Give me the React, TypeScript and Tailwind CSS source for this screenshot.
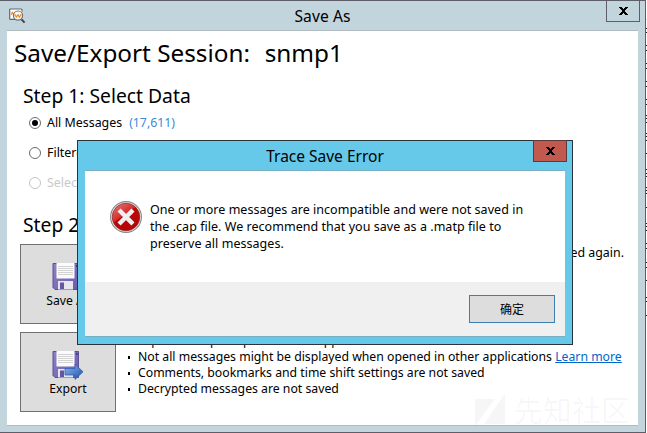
import React from "react";

function CloseX() {
  return (
    <svg width="9" height="8" viewBox="0 0 9 8" shapeRendering="crispEdges" fill="#000">
      <path d="M0 0h3v1h1v1h1v-1h1v-1h3v1h-1v1h-1v1h-1v2h1v1h1v1h1v1h-3v-1h-1v-1h-1v1h-1v1h-3v-1h1v-1h1v-1h1v-2h-1v-1h-1v-1h-1z" />
    </svg>
  );
}

function AppIcon() {
  return (
    <svg width="17" height="16" viewBox="0 0 17 16" fill="none">
      <path d="M6 11.4H1.6Q.7 11.4 .7 10.5V2Q.7 1 1.6 1H12Q13 1 13 2V3.5" fill="#fff" stroke="#666" strokeWidth="1.2" />
      <path d="M2 6.8L3.4 4.4L4.6 6.4" stroke="#f08a1c" strokeWidth="1.2" />
      <circle cx="9" cy="7.6" r="4.6" fill="#f6f7f7" stroke="#707070" strokeWidth="1.2" />
      <path d="M5.6 6.4L7.4 9L9 6.8L10.5 9L12.2 6.4" stroke="#f08a1c" strokeWidth="1.3" />
      <path d="M12.5 11.3L15.6 14.7" stroke="#444" strokeWidth="2" />
    </svg>
  );
}

function Floppy({ arrow }: { arrow?: boolean }) {
  return (
    <svg width="32" height="29" viewBox="0 0 32 29" className="shrink-0">
      <defs>
        <linearGradient id="disk" x1="0" y1="0" x2="1" y2="1">
          <stop offset="0" stopColor="#8f82c4" />
          <stop offset="1" stopColor="#6a5aab" />
        </linearGradient>
        <linearGradient id="arrow" x1="0" y1="0" x2="1" y2="1">
          <stop offset="0" stopColor="#8db8f0" />
          <stop offset="1" stopColor="#1c4fa8" />
        </linearGradient>
      </defs>
      <path d="M1 .5h25.5v26H3l-2-2z" fill="url(#disk)" stroke="#5b4f97" strokeWidth="1" />
      <rect x="4.5" y="0" width="18" height="15.5" fill="#fbfbfb" />
      <path d="M6 3.5h15M6 5.5h15M6 7.5h15M6 9.5h15M6 11.5h15" stroke="#d2d2d2" strokeWidth="1" />
      <rect x="24" y="2" width="1.5" height="2" fill="#40346f" />
      <rect x="6" y="18" width="15" height="8.5" fill="#e6e6ee" />
      <rect x="8" y="19.5" width="4" height="6.5" fill="#6555a4" />
      {arrow && (
        <path d="M13 17.5h10v-4.5l8 7.8l-8 7.7v-4.5h-10z" fill="url(#arrow)" stroke="#2f62b5" strokeWidth=".8" />
      )}
    </svg>
  );
}

function ErrorIcon() {
  return (
    <svg width="32" height="32" viewBox="0 0 32 32">
      <defs>
        <linearGradient id="err" x1="0" y1="0" x2=".7" y2="1">
          <stop offset="0" stopColor="#e88080" />
          <stop offset=".48" stopColor="#d42c2c" />
          <stop offset=".5" stopColor="#bd0505" />
          <stop offset="1" stopColor="#b00808" />
        </linearGradient>
      </defs>
      <circle cx="16" cy="16" r="15.4" fill="#f1f1f1" stroke="#858585" strokeWidth="1.1" />
      <circle cx="16" cy="16" r="13.8" fill="url(#err)" stroke="#8e1c1c" strokeWidth=".7" />
      <path d="M10.6 10.6l10.8 10.8M21.4 10.6L10.6 21.4" stroke="#f0f0f0" strokeWidth="4.4" strokeLinecap="square" />
    </svg>
  );
}

function Radio({ label, count, on, off }: { label: string; count?: string; on?: boolean; off?: boolean }) {
  return (
    <div className={`flex h-[30px] items-center pl-[22px] text-[12.4px] leading-5 ${off ? "text-[#c9c9c9]" : "text-black"}`}>
      <span
        className={`mr-[6px] flex size-3 items-center justify-center rounded-full border bg-white ${off ? "border-[#c4c4c4]" : "border-[#6b6b6b]"}`}
      >
        {on && <span className="size-1.5 rounded-full bg-black" />}
      </span>
      <span>{label}</span>
      {count && <span className="ml-[7px] text-[12.3px] text-[#3c8ad6]">{count}</span>}
    </div>
  );
}

function ActionButton({ label, arrow }: { label: string; arrow?: boolean }) {
  return (
    <button className="flex h-20 w-24 shrink-0 flex-col items-center border border-[#707070] bg-[#dddddd] pt-[18px] text-[12.2px] leading-[17px]">
      <Floppy arrow={arrow} />
      <span className="whitespace-nowrap">{label}</span>
    </button>
  );
}

function Bullet({ children }: { children: React.ReactNode }) {
  return (
    <li className="flex h-4 items-center whitespace-nowrap">
      <span className="mr-[8px] h-[3px] w-[2px] shrink-0 bg-black" />
      <span>{children}</span>
    </li>
  );
}

const specks = [19, 28, 32, 45, 50, 63, 68, 81, 86, 99, 104, 115, 118, 122, 133, 136, 140, 153, 169, 173, 176, 187, 190, 193, 207, 223, 226, 230, 243, 248, 262, 267, 280, 297, 301, 315];

export default function App() {
  return (
    <div className="relative flex h-[433px] w-[647px] overflow-hidden bg-white font-['Noto_Sans','Noto_Sans_CJK_SC',sans-serif] text-black">
      <div className="flex h-full w-[646px] shrink-0 flex-col border-y border-r border-[#5d5e68] bg-[#c3d5dc] pl-[7px] pr-[7px] pb-[6px]">
        <header className="relative flex h-[29px] shrink-0 items-center justify-center">
          <span className="absolute left-[2px] top-[7px]">
            <AppIcon />
          </span>
          <span className="text-[15.6px] tracking-[0.1px] leading-[28px]">Save As</span>
          <span className="absolute -right-[2px] -top-px flex h-[22px] w-[34px] items-center justify-center border border-[#5d5e68]">
            <CloseX />
          </span>
        </header>
        <main className="flex min-h-0 flex-1 flex-col border-y border-[#b0babf] bg-white">
          <h1 className="mt-[2px] pl-[7px] text-[24.3px] leading-10 whitespace-pre">
            Save/Export Session:<span className="ml-[2px]">  snmp1</span>
          </h1>
          <h2 className="mt-[9px] pl-[16px] text-[19.3px] leading-[27px]">Step 1: Select Data</h2>
          <div className="-mt-px">
            <Radio label="All Messages" count="(17,611)" on />
            <Radio label="Filtered Messages" />
            <Radio label="Selected Messages" off />
          </div>
          <h2 className="mt-[13px] pl-[16px] text-[19.3px] leading-[27px]">Step 2: Save</h2>
          <section className="mt-[6px] flex pl-[13px]">
            <ActionButton label="Save As" />
            <p className="flex-1 pr-[14px] text-right text-[12.4px] leading-[17px] whitespace-nowrap">
              Saves data as a .matp file that can be loaded again.
            </p>
          </section>
          <section className="mt-2 flex pl-[13px]">
            <ActionButton label="Export" arrow />
            <ul className="ml-[12px] mt-px text-[12.25px] leading-4">
              <Bullet>Export to .cap to open in other applications</Bullet>
              <Bullet>
                Not all messages might be displayed when opened in other applications{" "}
                <a className="text-[#0066cc] underline">Learn more</a>
              </Bullet>
              <Bullet>Comments, bookmarks and time shift settings are not saved</Bullet>
              <Bullet>Decrypted messages are not saved</Bullet>
            </ul>
          </section>
        </main>
      </div>

      <svg width="1" height="433" className="shrink-0" shapeRendering="crispEdges">
        {specks.map((y) => (
          <rect key={y} x="0" y={y} width="1" height="1" fill={y === 19 ? "#ddd" : "#222"} />
        ))}
      </svg>

      <div className="absolute left-[475px] top-[393px] flex items-center text-black/[0.035]">
        <svg width="31" height="36" viewBox="0 0 31 36" fill="currentColor">
          <path d="M0 6h20L0 33z" />
          <path d="M30 0v31H9z" />
        </svg>
        <span className="ml-2 text-[29px] leading-8">先知社区</span>
      </div>

      <div className="absolute left-[77px] top-[140px] flex h-[205px] w-[496px] flex-col border border-[#2b333a] bg-[#66c9ea] px-[7px] pb-[7px]">
        <header className="relative flex h-[29px] shrink-0 items-center justify-center">
          <span className="text-[15.5px] leading-[28px]">Trace Save Error</span>
          <span className="absolute -right-[2px] -top-px flex h-[22px] w-[34px] items-center justify-center border border-[#5a3a3c] bg-[#c1594f]">
            <CloseX />
          </span>
        </header>
        <div className="flex min-h-0 flex-1 flex-col border-y border-[#79aec3] bg-white">
          <div className="flex h-[111px] shrink-0 pl-[25px] pt-[30px]">
            <ErrorIcon />
            <p className="ml-2 text-[12.5px] leading-[17px] tracking-[0.035px] whitespace-nowrap">
              One or more messages are incompatible and were not saved in
              <br />
              the .cap file. We recommend that you save as a .matp file to
              <br />
              preserve all messages.
            </p>
          </div>
          <footer className="flex flex-1 items-start justify-end bg-[#f0f0f0] pt-[13px] pr-[10px]">
            <button className="h-7 w-[86px] border border-[#3c7fb1] bg-[#dddddd] font-['Noto_Sans_CJK_SC',sans-serif] text-[12px] leading-[26px]">确定</button>
          </footer>
        </div>
      </div>
    </div>
  );
}
